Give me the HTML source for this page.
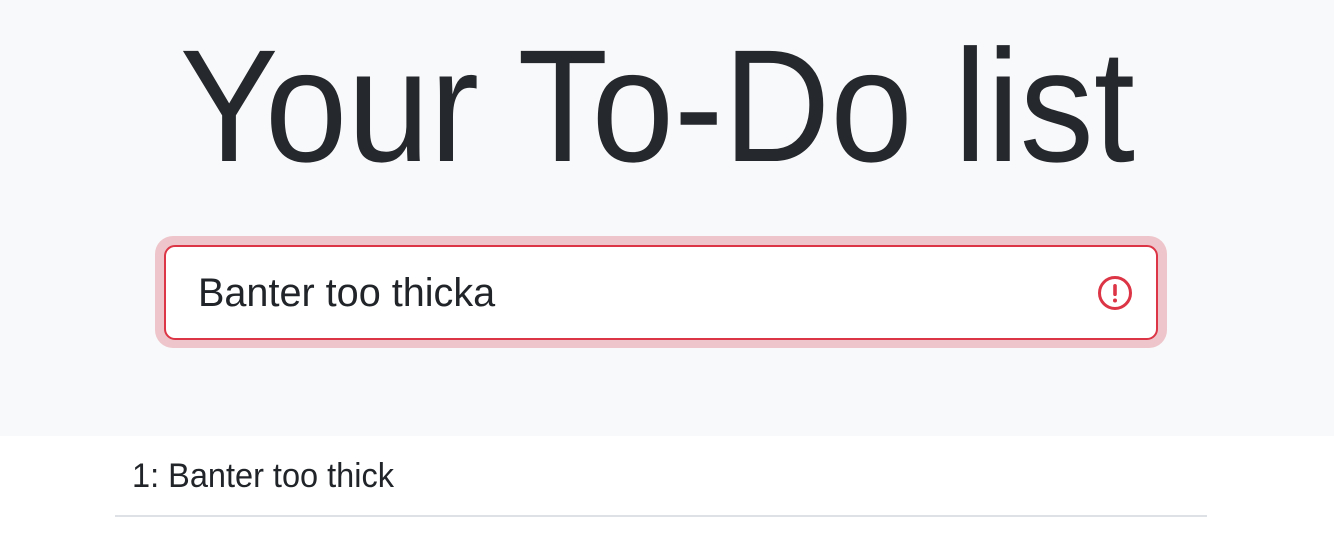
<!DOCTYPE html>
<html><head><style>
body{margin:0;width:1334px;height:544px;overflow:hidden;background:#fff;font-family:"Liberation Sans",sans-serif;color:#212529;position:relative}
.jb{position:absolute;left:0;top:0;width:1334px;height:436px;background:#f8f9fa}
.t{position:absolute;left:-9px;width:1334px;text-align:center;line-height:1;white-space:nowrap}
.glow{position:absolute;left:155px;top:236px;width:1012px;height:112px;border-radius:18px;background:rgba(210,60,75,.27)}
.inp{position:absolute;left:164px;top:245px;width:990px;height:91px;border:2px solid #dc3545;border-radius:11px;background:#fff}
</style></head><body>
<div class="jb"></div>
<div class="t" style="top:26px;font-size:160px;transform:scaleX(0.926);transform-origin:658px 0;color:#25282c">Your To-Do list</div>
<div class="glow"></div>
<div class="inp"></div>
<div style="position:absolute;left:198px;top:273px;font-size:40px;line-height:1;white-space:nowrap;transform:scaleX(0.99);transform-origin:0 0">Banter too thicka</div>
<svg style="position:absolute;left:1097px;top:275px" width="36" height="36" viewBox="0 0 36 36"><circle cx="18" cy="18" r="15.5" fill="none" stroke="#dc3545" stroke-width="3"/><rect x="16.2" y="9" width="3.6" height="12" rx="1.8" fill="#dc3545"/><circle cx="18" cy="25.5" r="2" fill="#dc3545"/></svg>
<div style="position:absolute;left:132px;top:459px;font-size:34px;line-height:1;white-space:nowrap;transform:scaleX(0.956);transform-origin:0 0">1: Banter too thick</div>
<div style="position:absolute;left:115px;top:515px;width:1092px;height:2px;background:#dee2e6"></div>
</body></html>
